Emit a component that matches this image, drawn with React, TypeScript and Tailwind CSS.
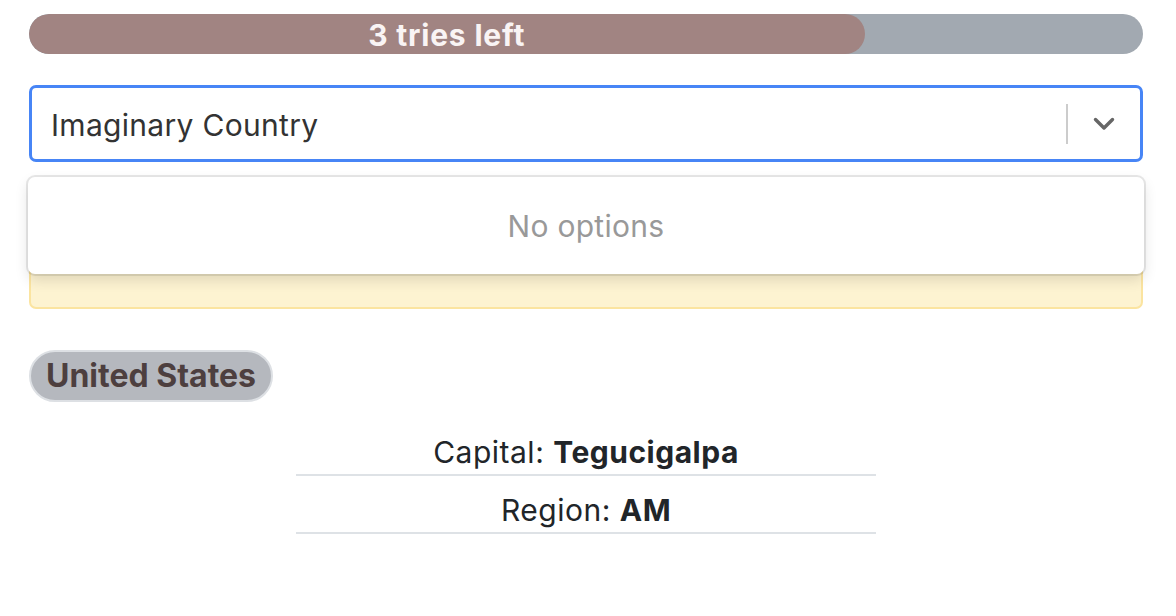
import React from 'react';

const font = { fontFamily: 'Inter, "Noto Sans", sans-serif' };

const ChevronDown = () => (
  <svg width="22" height="14" viewBox="0 0 22 14" fill="none">
    <path d="M2.5 2.5 L11 11 L19.5 2.5" stroke="#666666" strokeWidth="3.4" strokeLinecap="round" strokeLinejoin="round" />
  </svg>
);

const App = () => {
  const triesLeft = 3;
  const progress = 75;

  return (
    <div className="w-full min-h-screen bg-white" style={font}>
      <div className="px-[29px] pt-[14px] pr-[33px]">
        {/* Tries progress */}
        <div className="h-[40px] w-full rounded-full bg-[#a2a9b1] overflow-hidden">
          <div
            className="h-full rounded-full bg-[#a18482] flex items-center justify-center pt-[2px] text-[30px] font-bold tracking-[0.8px] text-[#f9f4f4] leading-none"
            style={{ width: `${progress}%` }}
          >
            {triesLeft} tries left
          </div>
        </div>

        {/* Country select */}
        <div className="relative mt-[31px]">
          <div className="h-[77px] w-full flex items-center border-[3px] border-[#4785f6] rounded-[7px] bg-white">
            <div className="flex-1 pl-[19px] pt-[3px] text-[30px] tracking-[0.3px] text-[#333333]">Imaginary Country</div>
            <div className="w-[2px] h-[40px] bg-[#cccccc]" />
            <div className="w-[72px] flex items-center justify-center">
              <ChevronDown />
            </div>
          </div>

          {/* Menu */}
          <div className="absolute z-10 left-[-1px] right-[-1px] top-full mt-[15px] h-[97px] bg-white rounded-[7px] flex items-center justify-center pt-[2px] text-[30px] tracking-[0.3px] text-[#999999] shadow-[0_0_0_2px_rgba(0,0,0,0.09),0_6px_14px_rgba(0,0,0,0.12)]">
            No options
          </div>
        </div>

        {/* Alert (covered by the menu) */}
        <div className="mt-[21px] h-[126px] w-full rounded-[7px] border-2 border-[#fbe4a0] bg-[#fdf3d1]" />

        {/* Guessed country */}
        <div className="mt-[41px]">
          <span className="inline-flex items-center h-[52px] px-[15px] rounded-full border-2 border-[#dde0e4] bg-[#b5b8be] text-[32px] font-bold text-[#4d3f3f]">
            United States
          </span>
        </div>

        {/* Clues */}
        <div className="mt-[16px] w-[580px] mx-auto text-[30px] tracking-[0.5px] text-[#212529]">
          <div className="h-[58px] pt-[12px] flex items-center justify-center border-b-2 border-[#dee2e6]">
            <span>
              Capital: <b className="font-bold">Tegucigalpa</b>
            </span>
          </div>
          <div className="h-[58px] pt-[12px] flex items-center justify-center border-b-2 border-[#dee2e6]">
            <span>
              Region: <b className="font-bold">AM</b>
            </span>
          </div>
        </div>
      </div>
    </div>
  );
};

export default App;
